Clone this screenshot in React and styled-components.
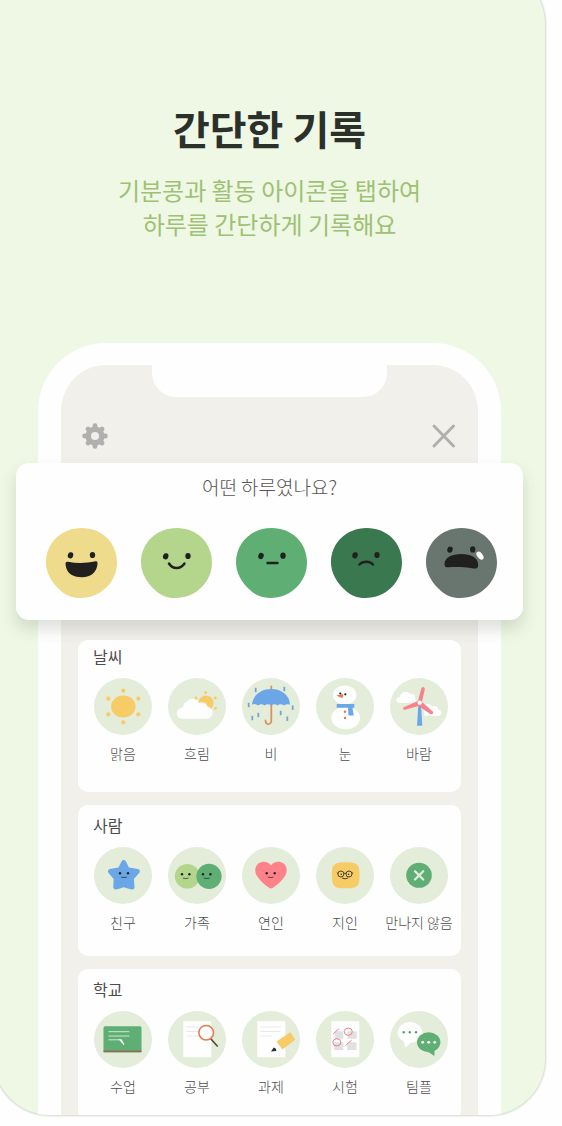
import styled, { createGlobalStyle } from "styled-components";

const GlobalStyle = createGlobalStyle`
  * {
    box-sizing: border-box;
  }
  body {
    margin: 0;
    background-color: #fefefe;
    font-family: "Noto Sans CJK KR", "Noto Sans", sans-serif;
    overflow: hidden;
  }
`;

const Poster = styled.main`
  margin: -32px 17px 10px -6px;
  border-radius: 56px;
  background-color: #eef8e4;
  box-shadow: 0 0 2px 1px #d3d8cd;
  overflow: hidden;
`;

const Header = styled.header`
  padding: 130px 20px 102px;
  text-align: center;
`;

const Title = styled.h1`
  margin: 0 0 15px;
  font-size: 40px;
  font-weight: 700;
  line-height: 60px;
  color: #2c302b;
`;

const SubTitle = styled.p`
  margin: 0;
  font-size: 24px;
  font-weight: 400;
  line-height: 34px;
  color: #a0c075;
`;

const Phone = styled.section`
  margin: 0 44px -5px;
  border: solid #fefefe;
  border-width: 22px 23px 0;
  border-radius: 68px 68px 0 0;
  background-color: #f1f0eb;
`;

const Notch = styled.div`
  width: 235px;
  height: 32px;
  margin: 0 auto;
  border-radius: 0 0 24px 24px;
  background-color: #fefefe;
`;

const Toolbar = styled.div`
  display: flex;
  justify-content: space-between;
  padding: 26px 21px 14px;
`;

const IconButton = styled.button`
  display: flex;
  width: 26px;
  height: 26px;
  padding: 0;
  border: none;
  background: none;
  cursor: pointer;
`;

const MoodCard = styled.section`
  margin: 0 -45px 20px;
  padding: 10px 0 22px;
  border-radius: 13px;
  background-color: #fefefe;
  box-shadow: 0 9px 16px rgba(60, 70, 50, 0.17);
`;

const Question = styled.h2`
  margin: 0 0 27px;
  font-size: 19px;
  font-weight: 300;
  line-height: 28px;
  text-align: center;
  color: #555;
`;

const MoodList = styled.div`
  display: flex;
  justify-content: space-between;
  padding: 0 26px 0 30px;
`;

const MoodButton = styled.button`
  display: flex;
  padding: 0;
  border: none;
  background: none;
  cursor: pointer;
`;

const CardList = styled.div`
  display: flex;
  flex-direction: column;
  gap: 13px;
  padding: 0 17px;
`;

const Card = styled.section`
  padding: ${(props) => (props.$first ? "4px 5px 29px 8px" : "8px 5px 24px 8px")};
  border-radius: 10px;
  background-color: #fefefe;
`;

const CardTitle = styled.h3`
  margin: 0 0 10px 7px;
  font-size: 16px;
  font-weight: 400;
  line-height: 24px;
  color: #4c4c4c;
`;

const ActivityList = styled.div`
  display: grid;
  grid-template-columns: repeat(5, 1fr);
`;

const Activity = styled.button`
  display: flex;
  flex-direction: column;
  align-items: center;
  gap: 8px;
  min-width: 0;
  padding: 0;
  border: none;
  background: none;
  font-family: inherit;
  font-size: 14px;
  font-weight: 300;
  line-height: 20px;
  white-space: nowrap;
  color: #4c4c4c;
  cursor: pointer;
`;

const ink = "#20211e";

function GearIcon() {
  return (
    <svg width="26" height="26" viewBox="0 0 26 26">
      <g stroke="#b0b0af" strokeWidth="4.8" strokeLinecap="round">
        <path d="M13 2.6V23.4M2.6 13H23.4M6 6L20 20M20 6L6 20" />
      </g>
      <circle cx="13" cy="13" r="9.6" fill="#b0b0af" />
      <circle cx="13" cy="13" r="4" fill="#f1f0eb" />
    </svg>
  );
}

function CloseIcon() {
  return (
    <svg width="26" height="26" viewBox="0 0 26 26">
      <path d="M3 3L22.5 23M22.5 3L3 23" stroke="#b0b0af" strokeWidth="3" strokeLinecap="round" />
    </svg>
  );
}

function Bean({ color, children }) {
  return (
    <svg width="71" height="70" viewBox="0 0 71 70">
      <path
        d="M35.5 0C56 0 71 14.500 71 34.500C71 54 55 70 34 70C26 70 19.500 67.500 14 62C6 55 0 45 0 34.500C0 15 15.500 0 35.500 0Z"
        fill={color}
      />
      {children}
    </svg>
  );
}

function Eyes({ y, left = 24.5, right = 46.5 }) {
  return (
    <g fill={ink}>
      <ellipse cx={left} cy={y} rx="2.7" ry="3.1" transform={`rotate(18 ${left} ${y})`} />
      <ellipse cx={right} cy={y - 0.3} rx="2.7" ry="3.1" />
    </g>
  );
}

const moods = [
  {
    name: "아주 좋음",
    color: "#eedb8c",
    face: (
      <>
        <Eyes y={27.3} />
        <path
          d="M22 33.8C31 35.6 40 35.4 49.5 33.3C51.2 33 51.7 34 51.5 36C50.8 44 45 49.3 36 49.3C26.5 49.3 20.5 45 19.6 37C19.3 34.5 20 33.5 22 33.8Z"
          fill={ink}
        />
      </>
    ),
  },
  {
    name: "좋음",
    color: "#b4d68c",
    face: (
      <>
        <Eyes y={28.3} left={24.7} right={47} />
        <path d="M28 35.5C31.5 41.5 39.5 41.5 43.5 35.5" stroke={ink} strokeWidth="2.5" strokeLinecap="round" fill="none" />
      </>
    ),
  },
  {
    name: "보통",
    color: "#5fae74",
    face: (
      <>
        <Eyes y={28} left={25} right={47} />
        <path d="M31.5 35H41.5" stroke={ink} strokeWidth="2.5" strokeLinecap="round" />
      </>
    ),
  },
  {
    name: "나쁨",
    color: "#3a7850",
    face: (
      <>
        <Eyes y={27.3} left={24} right={46} />
        <path d="M28.5 36.5C32 32.9 38.5 32.9 42 36.5" stroke={ink} strokeWidth="2.5" strokeLinecap="round" fill="none" />
      </>
    ),
  },
  {
    name: "아주 나쁨",
    color: "#69766f",
    face: (
      <>
        <Eyes y={21.7} left={24} right={46.7} />
        <path
          d="M18.5 36C18.5 29.5 26 26 35 26C45 26 52.2 29.5 52.2 37C52.2 40.2 50.5 40.8 47.5 40.5C39 39.3 31 38.8 23 39.3C20 39.5 18.5 39 18.500 36Z"
          fill={ink}
        />
        <ellipse cx="54" cy="27.7" rx="2.7" ry="4.6" transform="rotate(-38 54 27.7)" fill="#fefefe" />
      </>
    ),
  },
];

function Badge({ children }) {
  return (
    <svg width="58" height="57" viewBox="0 0 58 57">
      <ellipse cx="29" cy="28.5" rx="29" ry="28.4" fill="#e3edda" />
      {children}
    </svg>
  );
}

function Dots({ points, r = 2, color }) {
  return points.map(([x, y]) => <circle key={`${x}-${y}`} cx={x} cy={y} r={r} fill={color} />);
}

function TinyFace({ x, y, gap = 8 }) {
  return (
    <g>
      <circle cx={x - gap / 2} cy={y} r="1.2" fill={ink} />
      <circle cx={x + gap / 2} cy={y} r="1.2" fill={ink} />
      <path
        d={`M${x - 2.8} ${y + 3.8}Q${x} ${y + 4.7} ${x + 2.8} ${y + 3.8}`}
        stroke={ink}
        strokeWidth="0.7"
        fill="none"
      />
    </g>
  );
}

function Paper() {
  return <path d="M15.3 10.3H43.3V46.3H15.3Z" fill="#fefefe" />;
}

function SunIcon() {
  return (
    <Badge>
      <ellipse cx="29.3" cy="28.5" rx="12.2" ry="11" fill="#f7cb66" />
      <Dots
        color="#f7cb66"
        r={2.1}
        points={[[29.3, 12.7], [29.3, 44.3], [14.3, 20.7], [44.3, 20.7], [14.3, 36.3], [44.3, 36.3]]}
      />
    </Badge>
  );
}

function CloudyIcon() {
  return (
    <Badge>
      <circle cx="38" cy="25" r="7.6" fill="#f7cb66" />
      <Dots color="#f7cb66" r={1.4} points={[[37.7, 14.7], [47.3, 20], [47.3, 30.3], [28, 20]]} />
      <path
        d="M14.5 40.7C6.5 40.5 7 29.8 15.2 29.2C15.3 25.5 17 24 18.5 24.3C20.5 19.5 28.5 19.5 30.8 25C34.5 23.2 39 25 39.5 28.5C46.5 29.8 46.5 40.2 39 40.7Z"
        fill="#fefefe"
      />
    </Badge>
  );
}

function RainIcon() {
  const drops = [[13.7, 12], [6.7, 27], [10.3, 40], [16.3, 37], [42.3, 11], [50.7, 29.7], [38.7, 35], [45.3, 40.7]];
  return (
    <Badge>
      <path d="M29.3 8.5V42.5C29.3 47.5 23.5 47.2 23.5 42.5" stroke="#dc9160" strokeWidth="1.8" strokeLinecap="round" fill="none" />
      <path
        d="M10 26.5C11 17 19 11 29.3 11C39.5 11 47.5 17 48 26.5Q44.5 25.5 42 27.5Q38.5 25 35.5 27.5Q32.5 25 29.3 27.5Q26 25 22.5 27.5Q19.5 25 16 27.5Q13.5 25 10 26.5Z"
        fill="#6ba6e6"
      />
      {drops.map(([x, y]) => (
        <path key={x} d={`M${x} ${y - 2.2}V${y + 2.2}`} stroke="#78a3cf" strokeWidth="1.8" />
      ))}
    </Badge>
  );
}

function SnowIcon() {
  return (
    <Badge>
      <ellipse cx="29.7" cy="40" rx="14.3" ry="11.2" fill="#fefefe" />
      <ellipse cx="28.7" cy="17" rx="11.7" ry="9.5" fill="#fefefe" />
      <path d="M20.7 26H38.3V29.7H36.5L37.7 37.5H32.5L32 29.7H20.7Z" fill="#6ba6e6" />
      <Dots color={ink} r={1.1} points={[[24.3, 15.5], [29.3, 16.3]]} />
      <path d="M20.3 17.5L27 16Q28 18.500 26 20Z" fill="#dd794c" />
      <Dots color="#dd794c" r={1.2} points={[[29, 33.7], [29, 40]]} />
    </Badge>
  );
}

function WindIcon() {
  return (
    <Badge>
      <path d="M9.5 25C5 25 5.5 18.8 10 19C10 14 17.5 12 20 16C24 15 26 18 25 20.5C27 22 26 25 23.5 25Z" fill="#fefefe" />
      <path d="M34 37.7V28C36 25.5 40 25 42 29C45 27 48.5 28.5 48 31.5C52.5 32 52.5 37.7 48.5 37.7Z" fill="#fefefe" />
      <path d="M28.3 27H31L32.3 47.8H27Z" fill="#6ba6e6" />
      <path
        d="M28 23L31.3 10.5Q32 8.8 33.500 9.2Q35 9.7 34.8 11.3L32 24L42.8 33.5Q43.8 34.7 42.8 35.8Q41.8 36.6 40.3 36L28.5 28L15 31.7Q13.3 32 13 30.8Q12.8 29.4 14.3 28.9Z"
        fill="#f7828c"
      />
      <circle cx="29.7" cy="24.7" r="2.2" fill="#fefefe" />
    </Badge>
  );
}

function FriendIcon() {
  return (
    <Badge>
      <path
        d="M29.7 15.5L33.2 22.6L43.3 24.4L37.3 31L38 40L29.7 37.5L21.8 40L22.2 31L16.4 24.4L26.2 22.6Z"
        fill="#6ba6e6"
        stroke="#6ba6e6"
        strokeWidth="5"
        strokeLinejoin="round"
      />
      <TinyFace x={30} y={26.3} />
    </Badge>
  );
}

function FamilyIcon() {
  return (
    <Badge>
      <ellipse cx="19.3" cy="29.3" rx="12.5" ry="12.3" fill="#b4d68c" />
      <circle cx="41" cy="29.3" r="12.6" fill="#5fae74" />
      <TinyFace x={17.7} y={27.3} gap={7.4} />
      <TinyFace x={38.7} y={27.3} gap={7.4} />
    </Badge>
  );
}

function LoverIcon() {
  return (
    <Badge>
      <path
        d="M29 18.5C32 13.8 38 14 41.5 16.5C45.5 19.5 45.5 25 43 29C39.5 34.5 34.5 38.5 30.5 41Q29 41.8 27.5 41C23 38 18.5 34.5 15 29C12.5 25 12.5 19.5 16.5 16.5C20 14 26 13.8 29 18.5Z"
        fill="#ff8189"
      />
      <TinyFace x={28.7} y={26.3} />
    </Badge>
  );
}

function AcquaintanceIcon() {
  return (
    <Badge>
      <path
        d="M24 15.5Q29.7 14.8 35.5 15.5Q43 16 43.3 23Q43.9 29 43.3 34Q42.5 40.5 36 41Q29.7 41.5 23.5 41Q17 40.5 16.2 34Q15.5 28 16 23Q16.5 16 24 15.5Z"
        fill="#f7cb66"
      />
      <g fill="none" stroke="#4a432c" strokeWidth="1">
        <circle cx="24.9" cy="27" r="3" />
        <circle cx="33" cy="27" r="3" />
        <path d="M27.9 26.5Q29 25.8 30 26.5M21.9 26.3L20.8 25.8M36 26.3L37.2 25.8M26 31Q29 32.6 32 31" />
      </g>
      <Dots color={ink} r={0.7} points={[[25.2, 27.2], [32.6, 27.2]]} />
    </Badge>
  );
}

function NobodyIcon() {
  return (
    <Badge>
      <ellipse cx="29" cy="28.3" rx="12.8" ry="12.5" fill="#5fae74" />
      <path d="M25 24.3L33.2 32.5M33.2 24.3L25 32.5" stroke="#e3edda" strokeWidth="2.3" strokeLinecap="round" />
    </Badge>
  );
}

function ClassIcon() {
  return (
    <Badge>
      <rect x="9.5" y="15.3" width="38" height="26" rx="1.5" fill="#5fae74" />
      <path d="M9.5 39.5H47.5V41.3H9.5Z" fill="#8a7053" />
      <path d="M14.5 20.7H35.3M14.5 25H35.3M14.5 28.8H25.5" stroke="#cfe9d4" strokeWidth="1" />
      <path d="M24.5 28.3H27.5L30.3 33.3L30 34.2Z" fill="#fefefe" />
    </Badge>
  );
}

function StudyIcon() {
  return (
    <Badge>
      <Paper />
      <path d="M18.3 16H30M18.3 20.5H30M18.3 25H31" stroke="#e9e9ea" strokeWidth="1" />
      <path d="M42.5 27.5L49.7 35.5" stroke="#59493b" strokeWidth="1.7" />
      <circle cx="38.2" cy="21.7" r="7.3" fill="#fefefe" stroke="#e27c50" strokeWidth="1.5" />
    </Badge>
  );
}

function HomeworkIcon() {
  return (
    <Badge>
      <Paper />
      <path d="M18.3 16H38.5M18.3 20.5H38.5M18.3 25H30" stroke="#e9e9ea" strokeWidth="1" />
      <path d="M29 40.6L35.5 29.8L40.5 38.5Z" fill="#fefefe" />
      <path d="M34.5 30.5L48.3 21.2L53.3 28.8L40.3 38.5Z" fill="#f7cb66" />
      <path d="M29 40.6L31.7 36.4Q34.5 37 34.3 40Z" fill="#2c2d3c" />
    </Badge>
  );
}

function ExamIcon() {
  return (
    <Badge>
      <Paper />
      <path d="M19 20.3H27.3V27.7H19ZM31.5 20.3H40.7V27.7H31.5ZM18 31.3H27.3V39H18ZM31.3 31.3H40.5V39H31.3Z" fill="#e1e0e2" />
      <g fill="none" stroke="#e8808c" strokeWidth="1">
        <path d="M17.3 22.7L23 17.7M29.7 34.3L35.5 29.3" />
        <ellipse cx="32.3" cy="20.7" rx="4" ry="3.6" />
        <ellipse cx="20.8" cy="31.3" rx="4" ry="3.6" />
      </g>
    </Badge>
  );
}

function TeamIcon() {
  return (
    <Badge>
      <ellipse cx="20" cy="21.5" rx="12.3" ry="10.4" fill="#fefefe" />
      <path d="M13.5 28L14.8 36.5Q19.5 34.5 20.5 30Z" fill="#fefefe" />
      <ellipse cx="38.7" cy="31.3" rx="11.7" ry="10" fill="#5fae74" />
      <path d="M37.5 40Q40 42.5 44.3 44.9L44.8 37Z" fill="#5fae74" />
      <Dots color="#5a9c73" r={1.2} points={[[13.7, 21.3], [19.8, 21.3], [26, 21.3]]} />
      <Dots color="#fefefe" r={1.4} points={[[32.7, 31.3], [38.7, 31.3], [44.7, 31.3]]} />
    </Badge>
  );
}

const groups = [
  {
    title: "날씨",
    items: [
      { name: "맑음", icon: <SunIcon /> },
      { name: "흐림", icon: <CloudyIcon /> },
      { name: "비", icon: <RainIcon /> },
      { name: "눈", icon: <SnowIcon /> },
      { name: "바람", icon: <WindIcon /> },
    ],
  },
  {
    title: "사람",
    items: [
      { name: "친구", icon: <FriendIcon /> },
      { name: "가족", icon: <FamilyIcon /> },
      { name: "연인", icon: <LoverIcon /> },
      { name: "지인", icon: <AcquaintanceIcon /> },
      { name: "만나지 않음", icon: <NobodyIcon /> },
    ],
  },
  {
    title: "학교",
    items: [
      { name: "수업", icon: <ClassIcon /> },
      { name: "공부", icon: <StudyIcon /> },
      { name: "과제", icon: <HomeworkIcon /> },
      { name: "시험", icon: <ExamIcon /> },
      { name: "팀플", icon: <TeamIcon /> },
    ],
  },
];

function MoodSection() {
  return (
    <MoodCard>
      <Question>어떤 하루였나요?</Question>
      <MoodList>
        {moods.map((mood) => (
          <MoodButton key={mood.name} type="button" aria-label={mood.name}>
            <Bean color={mood.color}>{mood.face}</Bean>
          </MoodButton>
        ))}
      </MoodList>
    </MoodCard>
  );
}

function ActivityCard({ title, items, first }) {
  return (
    <Card $first={first}>
      <CardTitle>{title}</CardTitle>
      <ActivityList>
        {items.map((item) => (
          <Activity key={item.name} type="button">
            {item.icon}
            <span>{item.name}</span>
          </Activity>
        ))}
      </ActivityList>
    </Card>
  );
}

export default function App() {
  return (
    <>
      <GlobalStyle />
      <Poster>
        <Header>
          <Title>간단한 기록</Title>
          <SubTitle>
            기분콩과 활동 아이콘을 탭하여
            <br />
            하루를 간단하게 기록해요
          </SubTitle>
        </Header>
        <Phone>
          <Notch />
          <Toolbar>
            <IconButton type="button" aria-label="설정">
              <GearIcon />
            </IconButton>
            <IconButton type="button" aria-label="닫기">
              <CloseIcon />
            </IconButton>
          </Toolbar>
          <MoodSection />
          <CardList>
            {groups.map((group, index) => (
              <ActivityCard key={group.title} title={group.title} items={group.items} first={index === 0} />
            ))}
          </CardList>
        </Phone>
      </Poster>
    </>
  );
}
